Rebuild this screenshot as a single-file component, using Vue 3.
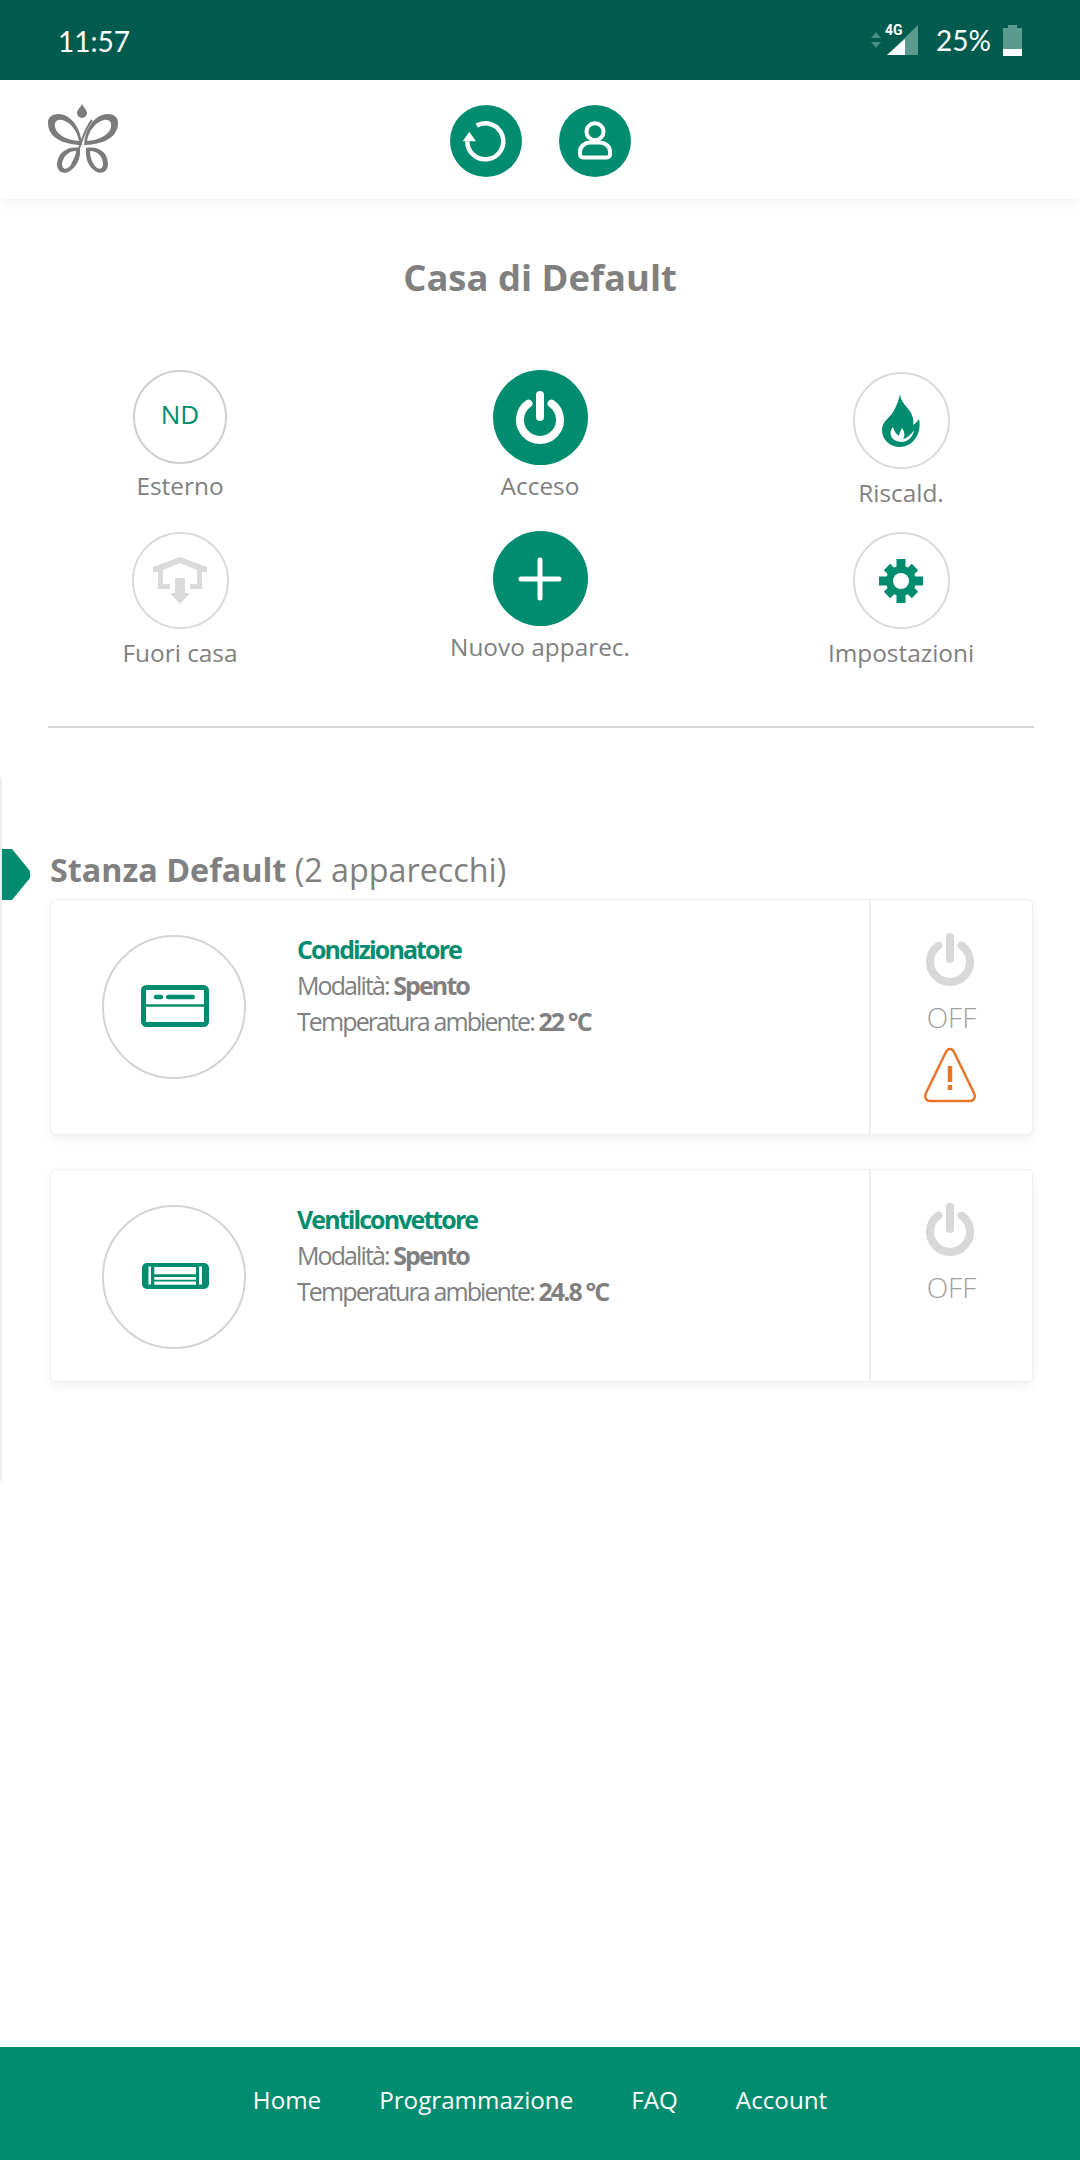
<template>
  <div class="page">
    <div class="status">
      <span class="time">11:57</span>
      <div class="status-right">
        <svg class="net" width="12" height="16" viewBox="0 0 12 16">
          <path d="M6 0l5 6H1zM6 16l5-6H1z" fill="#4a8f83" />
        </svg>
        <div class="signal">
          <span class="four-g">4G</span>
          <svg width="31" height="30" viewBox="0 0 31 30">
            <path d="M31 0V30H0z" fill="#5c9a8f" />
            <path d="M18 14V30H0z" fill="#fff" />
          </svg>
        </div>
        <span class="pct">25%</span>
        <svg width="19" height="31" viewBox="0 0 19 31">
          <path d="M5 0h9v3h5v28H0V3h5z" fill="#5c9a8f" />
          <path d="M0 24h19v7H0z" fill="#fff" />
        </svg>
      </div>
    </div>

    <header class="header">
      <svg class="logo" width="74" height="72" viewBox="26 24 74 72">
        <path d="M62 24c2 4 5 6 5 9a5 5 0 0 1-10 0c0-3 3-5 5-9z" fill="#7b7b7b" />
        <path fill-rule="evenodd" fill="#7b7b7b" d="M62 65C50 65 29 61 28 44 27 36 35 32 44 35 54 39 61 50 62 65zM59 61C48 60 37 56 35 47 34 42 37 39 42 40 50 42 57 50 59 61z" />
        <path fill-rule="evenodd" fill="#7b7b7b" d="M64 65C76 65 97 61 98 44 99 36 91 32 82 35 72 39 65 50 64 65zM67 61C78 60 89 56 91 47 92 42 89 39 84 40 76 42 69 50 67 61z" />
        <path fill-rule="evenodd" fill="#7b7b7b" d="M60 68C48 66 38 72 37 84 37 92 44 95 50 91 57 86 61 78 60 68zM56 71C48 71 43 77 42 84 42 89 46 90 49 87 53 83 56 77 56 71z" />
        <path fill-rule="evenodd" fill="#7b7b7b" d="M66 68C78 66 88 72 88 84 88 92 81 95 75 91 68 86 65 78 66 68zM70 71C78 71 83 77 83 84 83 89 79 90 76 87 72 83 70 77 70 71z" />
        <path d="M72 40C62 52 60 72 52 84" fill="none" stroke="#7b7b7b" stroke-width="2" />
      </svg>
      <div class="header-btns">
        <button class="head-btn">
          <svg width="48" height="44" viewBox="-2 0 48 44">
            <path d="M12.700 6.500A18 18 0 1 1 3.300 22.200" fill="none" stroke="#fff" stroke-width="4.500" />
            <path d="M5.300 12.800L-1.300 22.200H12z" fill="#fff" />
          </svg>
        </button>
        <button class="head-btn">
          <svg width="38" height="42" viewBox="0 0 38 42">
            <circle cx="19" cy="11.700" r="8.500" fill="none" stroke="#fff" stroke-width="4" />
            <path d="M7 37.500h24a3 3 0 0 0 3-3v-3c0-5-5-9-10-9H14c-5 0-10 4-10 9v3a3 3 0 0 0 3 3z" fill="#008c6e" stroke="#fff" stroke-width="4" />
          </svg>
        </button>
      </div>
    </header>

    <main class="main">
      <h1 class="title">Casa di Default</h1>

      <section class="actions">
        <div v-for="a in actions" :key="a.label" class="action" :class="a.cls">
          <div class="circle" :class="{ solid: a.solid }">
            <span v-if="a.icon === 'nd'" class="nd">ND</span>
            <svg v-else-if="a.icon === 'power'" width="50" height="53" viewBox="0 0 50 53">
              <path d="M13.500 12.600A20 20 0 1 0 36.500 12.600" fill="none" stroke="#fff" stroke-width="8" stroke-linecap="round" />
              <path d="M25 4v22" stroke="#fff" stroke-width="8" stroke-linecap="round" />
            </svg>
            <svg v-else-if="a.icon === 'flame'" width="40" height="56" viewBox="0 0 40 56">
              <path fill="#008c6e" fill-rule="evenodd" d="M19 1c1 9 7 12 11 19 2 4 3 9 2 12 2-1 4-3 6-6 3 13-5 28-19 28C9 54 1 47 1 37 1 28 8 26 12 19 15 14 18 7 19 1zM12 34c-4 4-4 14 8 15 8 0 12-6 13-12-3 5-7 8-11 9 2-3 2-7-1-11-1 3-3 5-3 8-3-2-5-5-6-9z" />
            </svg>
            <svg v-else-if="a.icon === 'home'" width="54" height="47" viewBox="0 0 54 47">
              <path d="M27 0L54 10v5h-5V32H37v-5h7V13L27 6 10 13V27h7v5H5V15H0v-5z" fill="#dadada" />
              <path d="M22 21h10v15h5L27 47 17 36h5z" fill="#dadada" />
            </svg>
            <svg v-else-if="a.icon === 'plus'" width="44" height="44" viewBox="0 0 44 44">
              <path d="M22 3v38M3 22h38" stroke="#fff" stroke-width="5" stroke-linecap="round" />
            </svg>
            <svg v-else-if="a.icon === 'gear'" width="44" height="44" viewBox="0 0 44 44">
              <g stroke="#008c6e" stroke-width="9">
                <path d="M22 0v44M0 22h44M8 8l28 28M36 8L8 36" />
              </g>
              <circle cx="22" cy="22" r="15" fill="#008c6e" />
              <circle cx="22" cy="22" r="8" fill="#fff" />
            </svg>
          </div>
          <span class="label">{{ a.label }}</span>
        </div>
      </section>

      <hr class="divider" />

      <section class="room">
        <span class="marker"></span>
        <h2 class="room-title"><b>Stanza Default</b> (2 apparecchi)</h2>

        <article v-for="d in devices" :key="d.name" class="card" :class="d.cls">
          <div class="device-body">
            <div class="device-circle">
              <svg v-if="d.icon === 'ac'" class="device-icon" width="68" height="42" viewBox="0 0 68 42">
                <rect x="2.500" y="2.500" width="63" height="37" rx="3" fill="none" stroke="#008c6e" stroke-width="5" />
                <path d="M2 20.500h64" stroke="#008c6e" stroke-width="2.500" />
                <path d="M15 12h5M27.250 12h24.500" stroke="#008c6e" stroke-width="4.500" stroke-linecap="round" />
              </svg>
              <svg v-else class="device-icon" width="67" height="26" viewBox="0 0 67 26">
                <rect width="67" height="26" rx="5" fill="#008c6e" />
                <path d="M6.500 3.500H9v18H6.500zM57 3.500h3v18h-3zM12.300 4H54v7.300H12.300zM12.300 14H54v2.700H12.300zM12.300 18.500H54v3.200H12.300z" fill="#fff" />
              </svg>
            </div>
            <div class="device-info">
              <div class="device-name">{{ d.name }}</div>
              <div class="device-line">Modalità: <b>Spento</b></div>
              <div class="device-line">Temperatura ambiente: <b>{{ d.temp }}</b></div>
            </div>
          </div>
          <div class="device-side">
            <svg class="side-icon" width="50" height="53" viewBox="0 0 50 53">
              <path d="M13.500 12.600A20 20 0 1 0 36.500 12.600" fill="none" stroke="#d8d8d8" stroke-width="8" stroke-linecap="round" />
              <path d="M25 4v22" stroke="#d8d8d8" stroke-width="8" stroke-linecap="round" />
            </svg>
            <span class="off">OFF</span>
            <svg v-if="d.warn" class="side-icon warn" width="56" height="56" viewBox="0 0 56 56">
              <path d="M24 5c2-4 6-4 8 0l20 41c2 4 0 8-4 8H8c-4 0-6-4-4-8z" fill="none" stroke="#e8742a" stroke-width="2.500" />
              <path d="M28 19v16" stroke="#e8742a" stroke-width="4.500" />
              <path d="M28 38v5" stroke="#e8742a" stroke-width="4.500" />
            </svg>
          </div>
        </article>
      </section>
    </main>

    <footer class="footer">
      <a v-for="l in links" :key="l">{{ l }}</a>
    </footer>
  </div>
</template>

<script setup>
const actions = [
  { label: 'Esterno', icon: 'nd', cls: 'a-nd' },
  { label: 'Acceso', icon: 'power', solid: true, cls: 'a-on' },
  { label: 'Riscald.', icon: 'flame', cls: 'a-heat' },
  { label: 'Fuori casa', icon: 'home', cls: 'a-away' },
  { label: 'Nuovo apparec.', icon: 'plus', solid: true, cls: 'a-new' },
  { label: 'Impostazioni', icon: 'gear', cls: 'a-set' },
]

const devices = [
  { name: 'Condizionatore', temp: '22 °C', icon: 'ac', warn: true, cls: 'c-ac' },
  { name: 'Ventilconvettore', temp: '24.8 °C', icon: 'fan', warn: false, cls: 'c-fan' },
]

const links = ['Home', 'Programmazione', 'FAQ', 'Account']
</script>

<style>
html,
body {
  margin: 0;
  background: #fff;
}
</style>

<style scoped>
.page {
  width: 1080px;
  height: 2160px;
  display: flex;
  flex-direction: column;
  font-family: "Open Sans", "Liberation Sans", sans-serif;
  color: #808080;
  overflow: hidden;
}

.status {
  height: 80px;
  flex: none;
  background: #005b4f;
  color: #fff;
  display: flex;
  align-items: center;
  justify-content: space-between;
  padding: 0 58px;
}

.time {
  font-family: Lato, sans-serif;
  font-size: 28px;
  margin-top: 2px;
}

.status-right {
  display: flex;
  align-items: center;
}

.signal {
  position: relative;
  width: 31px;
  height: 30px;
  margin: 0 18px 0 5px;
}

.signal svg {
  display: block;
}

.four-g {
  position: absolute;
  left: -2px;
  top: -3px;
  font-size: 14px;
  line-height: 16px;
  font-weight: 700;
  font-family: Roboto, sans-serif;
}

.pct {
  font-family: Lato, sans-serif;
  font-size: 28px;
  margin-right: 12px;
}

.header {
  position: relative;
  height: 119px;
  flex: none;
  display: flex;
  align-items: center;
  justify-content: center;
  background: #fff;
  box-shadow: 0 4px 12px rgba(0, 0, 0, 0.05);
}

.logo {
  position: absolute;
  left: 46px;
  top: 24px;
}

.header-btns {
  display: flex;
  gap: 37px;
  margin-top: 3px;
}

.head-btn {
  width: 72px;
  height: 72px;
  padding: 0;
  border: none;
  border-radius: 50%;
  background: #008c6e;
  display: flex;
  align-items: center;
  justify-content: center;
}

.main {
  flex: 1;
  min-height: 0;
}

.title {
  margin: 56px 0 0;
  font-size: 36.400px;
  line-height: 44px;
  font-weight: 700;
  text-align: center;
}

.actions {
  display: grid;
  grid-template-columns: 360px 360px 362px;
  grid-template-rows: 161px 195px;
  margin-top: 71px;
}

.action {
  display: flex;
  flex-direction: column;
  align-items: center;
}

.circle {
  width: 94px;
  height: 94px;
  box-sizing: border-box;
  border: 2.500px solid #cfcfcf;
  border-radius: 50%;
  display: flex;
  align-items: center;
  justify-content: center;
}

.circle.solid {
  width: 95px;
  height: 95px;
  border: none;
  background: #008c6e;
}

.a-heat .circle,
.a-away .circle,
.a-set .circle {
  width: 97px;
  height: 97px;
  border-color: #dadada;
}

.a-heat {
  margin-top: 2px;
}

.a-away,
.a-set {
  margin-top: 1px;
}

.nd {
  font-size: 26px;
  color: #008c6e;
  margin-top: -6px;
}

.label {
  font-size: 24.400px;
  line-height: 32px;
  margin-top: 6px;
}

.a-on .label,
.a-new .label {
  margin-top: 5px;
}

.a-away .label,
.a-set .label,
.a-heat .label {
  margin-top: 8px;
}

.divider {
  margin: 0 46px 0 48px;
  height: 2px;
  border: none;
  background: #d8d8d8;
}

.room {
  position: relative;
  margin-top: 49px;
  height: 704px;
  padding: 68px 47px 0 48px;
  border-left: 2px solid #eee;
  box-sizing: border-box;
}

.marker {
  position: absolute;
  left: 0;
  top: 72px;
  width: 28px;
  height: 51px;
  background: #008c6e;
  clip-path: polygon(0 0, 10px 0, 28px 22px, 28px 29px, 10px 100%, 0 100%);
}

.room-title {
  margin: 0;
  font-size: 32.300px;
  line-height: 48px;
  font-weight: 400;
  height: 54px;
}

.room-title b {
  font-weight: 700;
}

.card {
  display: flex;
  background: #fff;
  border: 1px solid #eee;
  border-radius: 6px;
  box-shadow: 0 4px 12px rgba(0, 0, 0, 0.06);
  box-sizing: border-box;
}

.c-ac {
  height: 236px;
  margin-bottom: 34px;
}

.c-fan {
  height: 213px;
}

.device-body {
  flex: 1;
  display: flex;
  align-items: flex-start;
  padding: 35px 0 0 51px;
}

.device-circle {
  width: 144px;
  height: 144px;
  box-sizing: border-box;
  border: 2px solid #d4d4d4;
  border-radius: 50%;
  display: flex;
  align-items: center;
  justify-content: center;
}

.device-icon {
  margin: -2px 0 0 2px;
}

.device-info {
  margin-left: 51px;
  margin-top: -4px;
}

.device-name,
.device-line {
  font-size: 25px;
  line-height: 36px;
  letter-spacing: -1.900px;
}

.device-name {
  font-weight: 700;
  color: #008c6e;
}

.device-side {
  width: 163px;
  flex: none;
  border-left: 2px solid #eee;
  display: flex;
  flex-direction: column;
  align-items: center;
  padding-top: 33px;
  box-sizing: border-box;
}

.side-icon {
  margin-left: -3px;
}

.off {
  font-size: 28px;
  line-height: 36px;
  color: #a0a0a0;
  font-weight: 300;
  margin-top: 13px;
}

.warn {
  margin-top: 12px;
}

.footer {
  height: 113px;
  flex: none;
  background: #008c6e;
  color: #fff;
  display: flex;
  align-items: center;
  justify-content: center;
  gap: 58px;
  font-size: 24.200px;
  padding-bottom: 8px;
  box-sizing: border-box;
}
</style>
